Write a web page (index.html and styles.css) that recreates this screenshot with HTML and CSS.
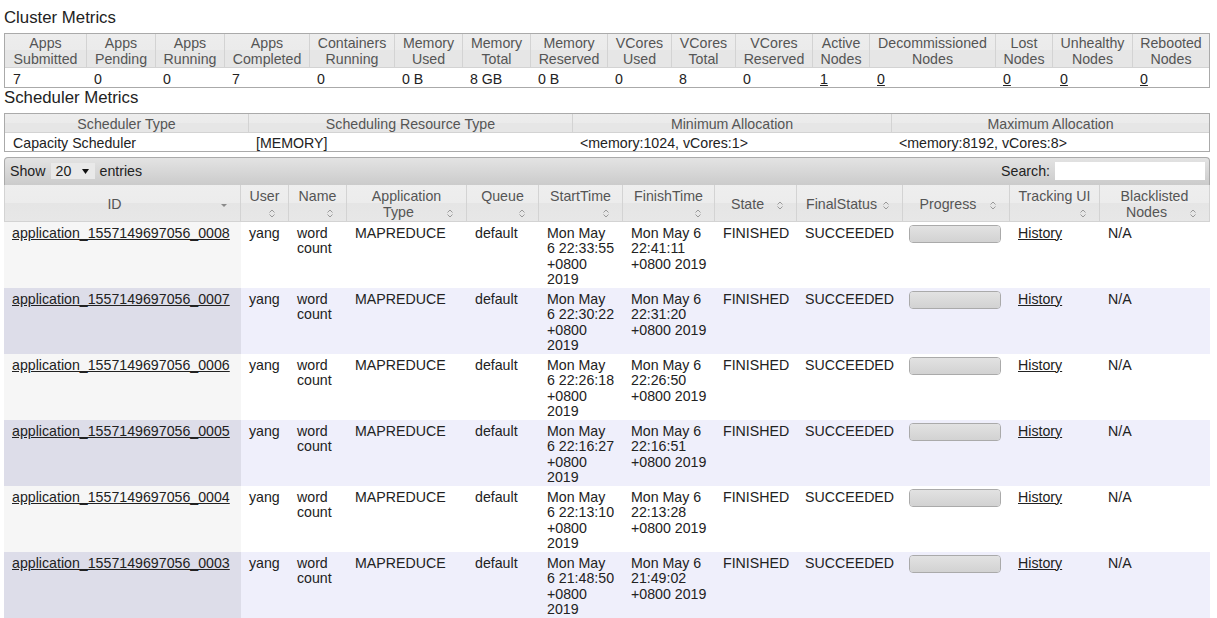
FILE: index.html
```html
<!DOCTYPE html>
<html>
<head>
<meta charset="utf-8">
<title>All Applications</title>
<link rel="stylesheet" href="styles.css">
</head>
<body>
<div class="content">
  <h3 class="section-title">Cluster Metrics</h3>
  <table class="metrics cluster">
    <thead>
      <tr>
        <th class="cm1">Apps Submitted</th>
        <th class="cm2">Apps Pending</th>
        <th class="cm3">Apps Running</th>
        <th class="cm4">Apps Completed</th>
        <th class="cm5">Containers Running</th>
        <th class="cm6">Memory Used</th>
        <th class="cm7">Memory Total</th>
        <th class="cm8">Memory Reserved</th>
        <th class="cm9">VCores Used</th>
        <th class="cm10">VCores Total</th>
        <th class="cm11">VCores Reserved</th>
        <th class="cm12">Active Nodes</th>
        <th class="cm13">Decommissioned Nodes</th>
        <th class="cm14">Lost Nodes</th>
        <th class="cm15">Unhealthy Nodes</th>
        <th class="cm16">Rebooted Nodes</th>
      </tr>
    </thead>
    <tbody>
      <tr>
        <td>7</td><td>0</td><td>0</td><td>7</td><td>0</td><td>0 B</td><td>8 GB</td><td>0 B</td>
        <td>0</td><td>8</td><td>0</td>
        <td><a href="#">1</a></td><td><a href="#">0</a></td><td><a href="#">0</a></td><td><a href="#">0</a></td><td><a href="#">0</a></td>
      </tr>
    </tbody>
  </table>

  <h3 class="section-title second">Scheduler Metrics</h3>
  <table class="metrics scheduler">
    <thead>
      <tr>
        <th class="sm1">Scheduler Type</th>
        <th class="sm2">Scheduling Resource Type</th>
        <th class="sm3">Minimum Allocation</th>
        <th class="sm4">Maximum Allocation</th>
      </tr>
    </thead>
    <tbody>
      <tr>
        <td>Capacity Scheduler</td>
        <td>[MEMORY]</td>
        <td>&lt;memory:1024, vCores:1&gt;</td>
        <td>&lt;memory:8192, vCores:8&gt;</td>
      </tr>
    </tbody>
  </table>

  <div class="apps-wrapper">
    <div class="toolbar">
      <div class="length">
        <span>Show</span>
        <span class="select-box"><span>20</span><svg class="select-arrow" width="7" height="5" viewBox="0 0 7 5"><polygon points="0,0 7,0 3.5,5" fill="#111"/></svg></span>
        <span>entries</span>
      </div>
      <label class="search">Search: <input type="text" class="search-input"></label>
    </div>
    <table class="apps">
      <thead>
        <tr>
          <th class="ac1"><div class="sort-wrap">ID<span class="sort-icon"><svg width="16" height="16" viewBox="0 0 16 16"><polygon points="5,7 11,7 8,10" fill="#8a8a8a"/></svg></span></div></th>
          <th class="ac2"><div class="sort-wrap">User<span class="sort-icon"><svg width="16" height="16" viewBox="0 0 16 16"><path d="M5.5 7.5 L8 5 L10.5 7.5 M5.5 9.5 L8 12 L10.5 9.5" fill="none" stroke="#9a9a9a" stroke-width="1"/></svg></span></div></th>
          <th class="ac3"><div class="sort-wrap">Name<span class="sort-icon"><svg width="16" height="16" viewBox="0 0 16 16"><path d="M5.5 7.5 L8 5 L10.5 7.5 M5.5 9.5 L8 12 L10.5 9.5" fill="none" stroke="#9a9a9a" stroke-width="1"/></svg></span></div></th>
          <th class="ac4"><div class="sort-wrap">Application Type<span class="sort-icon"><svg width="16" height="16" viewBox="0 0 16 16"><path d="M5.5 7.5 L8 5 L10.5 7.5 M5.5 9.5 L8 12 L10.5 9.5" fill="none" stroke="#9a9a9a" stroke-width="1"/></svg></span></div></th>
          <th class="ac5"><div class="sort-wrap">Queue<span class="sort-icon"><svg width="16" height="16" viewBox="0 0 16 16"><path d="M5.5 7.5 L8 5 L10.5 7.5 M5.5 9.5 L8 12 L10.5 9.5" fill="none" stroke="#9a9a9a" stroke-width="1"/></svg></span></div></th>
          <th class="ac6"><div class="sort-wrap">StartTime<span class="sort-icon"><svg width="16" height="16" viewBox="0 0 16 16"><path d="M5.5 7.5 L8 5 L10.5 7.5 M5.5 9.5 L8 12 L10.5 9.5" fill="none" stroke="#9a9a9a" stroke-width="1"/></svg></span></div></th>
          <th class="ac7"><div class="sort-wrap">FinishTime<span class="sort-icon"><svg width="16" height="16" viewBox="0 0 16 16"><path d="M5.5 7.5 L8 5 L10.5 7.5 M5.5 9.5 L8 12 L10.5 9.5" fill="none" stroke="#9a9a9a" stroke-width="1"/></svg></span></div></th>
          <th class="ac8"><div class="sort-wrap">State<span class="sort-icon"><svg width="16" height="16" viewBox="0 0 16 16"><path d="M5.5 7.5 L8 5 L10.5 7.5 M5.5 9.5 L8 12 L10.5 9.5" fill="none" stroke="#9a9a9a" stroke-width="1"/></svg></span></div></th>
          <th class="ac9"><div class="sort-wrap">FinalStatus<span class="sort-icon"><svg width="16" height="16" viewBox="0 0 16 16"><path d="M5.5 7.5 L8 5 L10.5 7.5 M5.5 9.5 L8 12 L10.5 9.5" fill="none" stroke="#9a9a9a" stroke-width="1"/></svg></span></div></th>
          <th class="ac10"><div class="sort-wrap">Progress<span class="sort-icon"><svg width="16" height="16" viewBox="0 0 16 16"><path d="M5.5 7.5 L8 5 L10.5 7.5 M5.5 9.5 L8 12 L10.5 9.5" fill="none" stroke="#9a9a9a" stroke-width="1"/></svg></span></div></th>
          <th class="ac11"><div class="sort-wrap">Tracking&nbsp;UI<span class="sort-icon"><svg width="16" height="16" viewBox="0 0 16 16"><path d="M5.5 7.5 L8 5 L10.5 7.5 M5.5 9.5 L8 12 L10.5 9.5" fill="none" stroke="#9a9a9a" stroke-width="1"/></svg></span></div></th>
          <th class="ac12"><div class="sort-wrap">Blacklisted Nodes<span class="sort-icon"><svg width="16" height="16" viewBox="0 0 16 16"><path d="M5.5 7.5 L8 5 L10.5 7.5 M5.5 9.5 L8 12 L10.5 9.5" fill="none" stroke="#9a9a9a" stroke-width="1"/></svg></span></div></th>
        </tr>
      </thead>
      <tbody>
        <tr class="odd">
          <td class="sorted"><a href="#">application_1557149697056_0008</a></td>
          <td>yang</td><td>word count</td><td>MAPREDUCE</td><td>default</td>
          <td>Mon May 6 22:33:55 +0800 2019</td><td>Mon May 6 22:41:11 +0800 2019</td>
          <td>FINISHED</td><td>SUCCEEDED</td>
          <td><div class="progress"><div class="progress-value"></div></div></td>
          <td><a href="#">History</a></td><td>N/A</td>
        </tr>
        <tr class="even">
          <td class="sorted"><a href="#">application_1557149697056_0007</a></td>
          <td>yang</td><td>word count</td><td>MAPREDUCE</td><td>default</td>
          <td>Mon May 6 22:30:22 +0800 2019</td><td>Mon May 6 22:31:20 +0800 2019</td>
          <td>FINISHED</td><td>SUCCEEDED</td>
          <td><div class="progress"><div class="progress-value"></div></div></td>
          <td><a href="#">History</a></td><td>N/A</td>
        </tr>
        <tr class="odd">
          <td class="sorted"><a href="#">application_1557149697056_0006</a></td>
          <td>yang</td><td>word count</td><td>MAPREDUCE</td><td>default</td>
          <td>Mon May 6 22:26:18 +0800 2019</td><td>Mon May 6 22:26:50 +0800 2019</td>
          <td>FINISHED</td><td>SUCCEEDED</td>
          <td><div class="progress"><div class="progress-value"></div></div></td>
          <td><a href="#">History</a></td><td>N/A</td>
        </tr>
        <tr class="even">
          <td class="sorted"><a href="#">application_1557149697056_0005</a></td>
          <td>yang</td><td>word count</td><td>MAPREDUCE</td><td>default</td>
          <td>Mon May 6 22:16:27 +0800 2019</td><td>Mon May 6 22:16:51 +0800 2019</td>
          <td>FINISHED</td><td>SUCCEEDED</td>
          <td><div class="progress"><div class="progress-value"></div></div></td>
          <td><a href="#">History</a></td><td>N/A</td>
        </tr>
        <tr class="odd">
          <td class="sorted"><a href="#">application_1557149697056_0004</a></td>
          <td>yang</td><td>word count</td><td>MAPREDUCE</td><td>default</td>
          <td>Mon May 6 22:13:10 +0800 2019</td><td>Mon May 6 22:13:28 +0800 2019</td>
          <td>FINISHED</td><td>SUCCEEDED</td>
          <td><div class="progress"><div class="progress-value"></div></div></td>
          <td><a href="#">History</a></td><td>N/A</td>
        </tr>
        <tr class="even">
          <td class="sorted"><a href="#">application_1557149697056_0003</a></td>
          <td>yang</td><td>word count</td><td>MAPREDUCE</td><td>default</td>
          <td>Mon May 6 21:48:50 +0800 2019</td><td>Mon May 6 21:49:02 +0800 2019</td>
          <td>FINISHED</td><td>SUCCEEDED</td>
          <td><div class="progress"><div class="progress-value"></div></div></td>
          <td><a href="#">History</a></td><td>N/A</td>
        </tr>
      </tbody>
    </table>
  </div>
</div>
</body>
</html>
```

FILE: styles.css
```css
* {
  box-sizing: border-box;
}

html,
body {
  margin: 0;
  padding: 0;
  background: #ffffff;
}

body {
  font-family: "Liberation Sans", Arial, Helvetica, sans-serif;
  font-size: 14.2px;
  color: #222222;
}

a {
  color: #222222;
  text-decoration: underline;
}

.content {
  padding: 8px 7px 0 4px;
}

.section-title {
  font-size: 16.8px;
  font-weight: normal;
  line-height: 19px;
  margin: 0 0 6px;
  color: #222222;
}

/* ---------- metric tables ---------- */
.metrics {
  width: 100%;
  table-layout: fixed;
  border-collapse: separate;
  border-spacing: 0;
  border: 1px solid #aaaaaa;
  background: #ffffff;
}

.metrics th {
  background: linear-gradient(#ededed 0%, #ebebeb 50%, #e6e6e6 50%, #e6e6e6 100%);
  color: #555555;
  font-weight: normal;
  line-height: 15.5px;
  padding: 2px 4px 0;
  text-align: center;
  vertical-align: middle;
  border-left: 1px solid #d3d3d3;
  border-bottom: 1px solid #d3d3d3;
}

.metrics th:first-child {
  border-left: none;
}

.metrics td {
  padding: 3px 8px 0;
  line-height: 16px;
  text-align: left;
  vertical-align: top;
}

.scheduler th {
  line-height: 16px;
}

.scheduler td {
  padding-top: 2px;
}

.cm1 { width: 81px; }
.cm2 { width: 69px; }
.cm3 { width: 69px; }
.cm4 { width: 85px; }
.cm5 { width: 85px; }
.cm6 { width: 68px; }
.cm7 { width: 68px; }
.cm8 { width: 77px; }
.cm9 { width: 64px; }
.cm10 { width: 64px; }
.cm11 { width: 77px; }
.cm12 { width: 57px; }
.cm13 { width: 126px; }
.cm14 { width: 57px; }
.cm15 { width: 80px; }
.cm16 { width: 77px; }

.sm1 { width: 243px; }
.sm2 { width: 324px; }
.sm3 { width: 319px; }
.sm4 { width: 318px; }

/* ---------- applications table ---------- */
.apps-wrapper {
  margin-top: 5px;
}

.toolbar {
  display: flex;
  justify-content: space-between;
  align-items: center;
  padding: 4px 4px 5px 5px;
  border: 1px solid #aaaaaa;
  border-bottom: none;
  border-radius: 4px 4px 0 0;
  background: linear-gradient(#e3e3e3, #cbcbcb);
  color: #222222;
  line-height: 18px;
}

.length {
  display: flex;
  align-items: center;
  gap: 5px;
}

.select-box {
  display: inline-flex;
  align-items: center;
  justify-content: space-between;
  width: 44px;
  height: 16px;
  padding: 0 6px 0 5px;
  background: #e9e9e9;
  line-height: 16px;
}

.select-arrow {
  display: block;
}

.search {
  display: flex;
  align-items: center;
  gap: 5px;
}

.search-input {
  width: 150px;
  height: 18px;
  border: none;
  padding: 0 3px;
  background: #ffffff;
  font: inherit;
  outline: none;
}

.apps {
  width: 100%;
  table-layout: fixed;
  border-collapse: separate;
  border-spacing: 0;
}

.apps th {
  background: linear-gradient(#eeeeee 0%, #ececec 50%, #e5e5e5 50%, #e7e7e7 100%);
  color: #555555;
  font-weight: normal;
  line-height: 15.5px;
  padding: 4px 8px 0;
  text-align: center;
  vertical-align: middle;
  border-right: 1px solid #d3d3d3;
  border-bottom: 1px solid #d3d3d3;
}

.apps th:first-child {
  border-left: 1px solid #d3d3d3;
}

.sort-icon {
  float: right;
  width: 16px;
  height: 16px;
}

.sort-icon svg {
  display: block;
}

.ac1 { width: 237px; }
.ac2 { width: 48px; }
.ac3 { width: 58px; }
.ac4 { width: 120px; }
.ac5 { width: 72px; }
.ac6 { width: 84px; }
.ac7 { width: 92px; }
.ac8 { width: 82px; }
.ac9 { width: 106px; }
.ac10 { width: 107px; }
.ac11 { width: 90px; }
.ac12 { width: 110px; }

.apps td {
  padding: 4px 7px 0 8px;
  line-height: 15.5px;
  height: 66px;
  vertical-align: top;
  text-align: left;
}

.apps tr.odd td {
  background: #ffffff;
}

.apps tr.odd td.sorted {
  background: #f6f6f6;
}

.apps tr.even td {
  background: #efeffb;
}

.apps tr.even td.sorted {
  background: #dddde9;
}

.progress {
  width: 92px;
  height: 18px;
  margin-left: -2px;
  margin-top: -1px;
  border: 1px solid #aaaaaa;
  border-radius: 4px;
  background: #ffffff;
  overflow: hidden;
}

.progress-value {
  width: 100%;
  height: 100%;
  background: linear-gradient(#e2e2e2, #d2d2d2);
}
```
